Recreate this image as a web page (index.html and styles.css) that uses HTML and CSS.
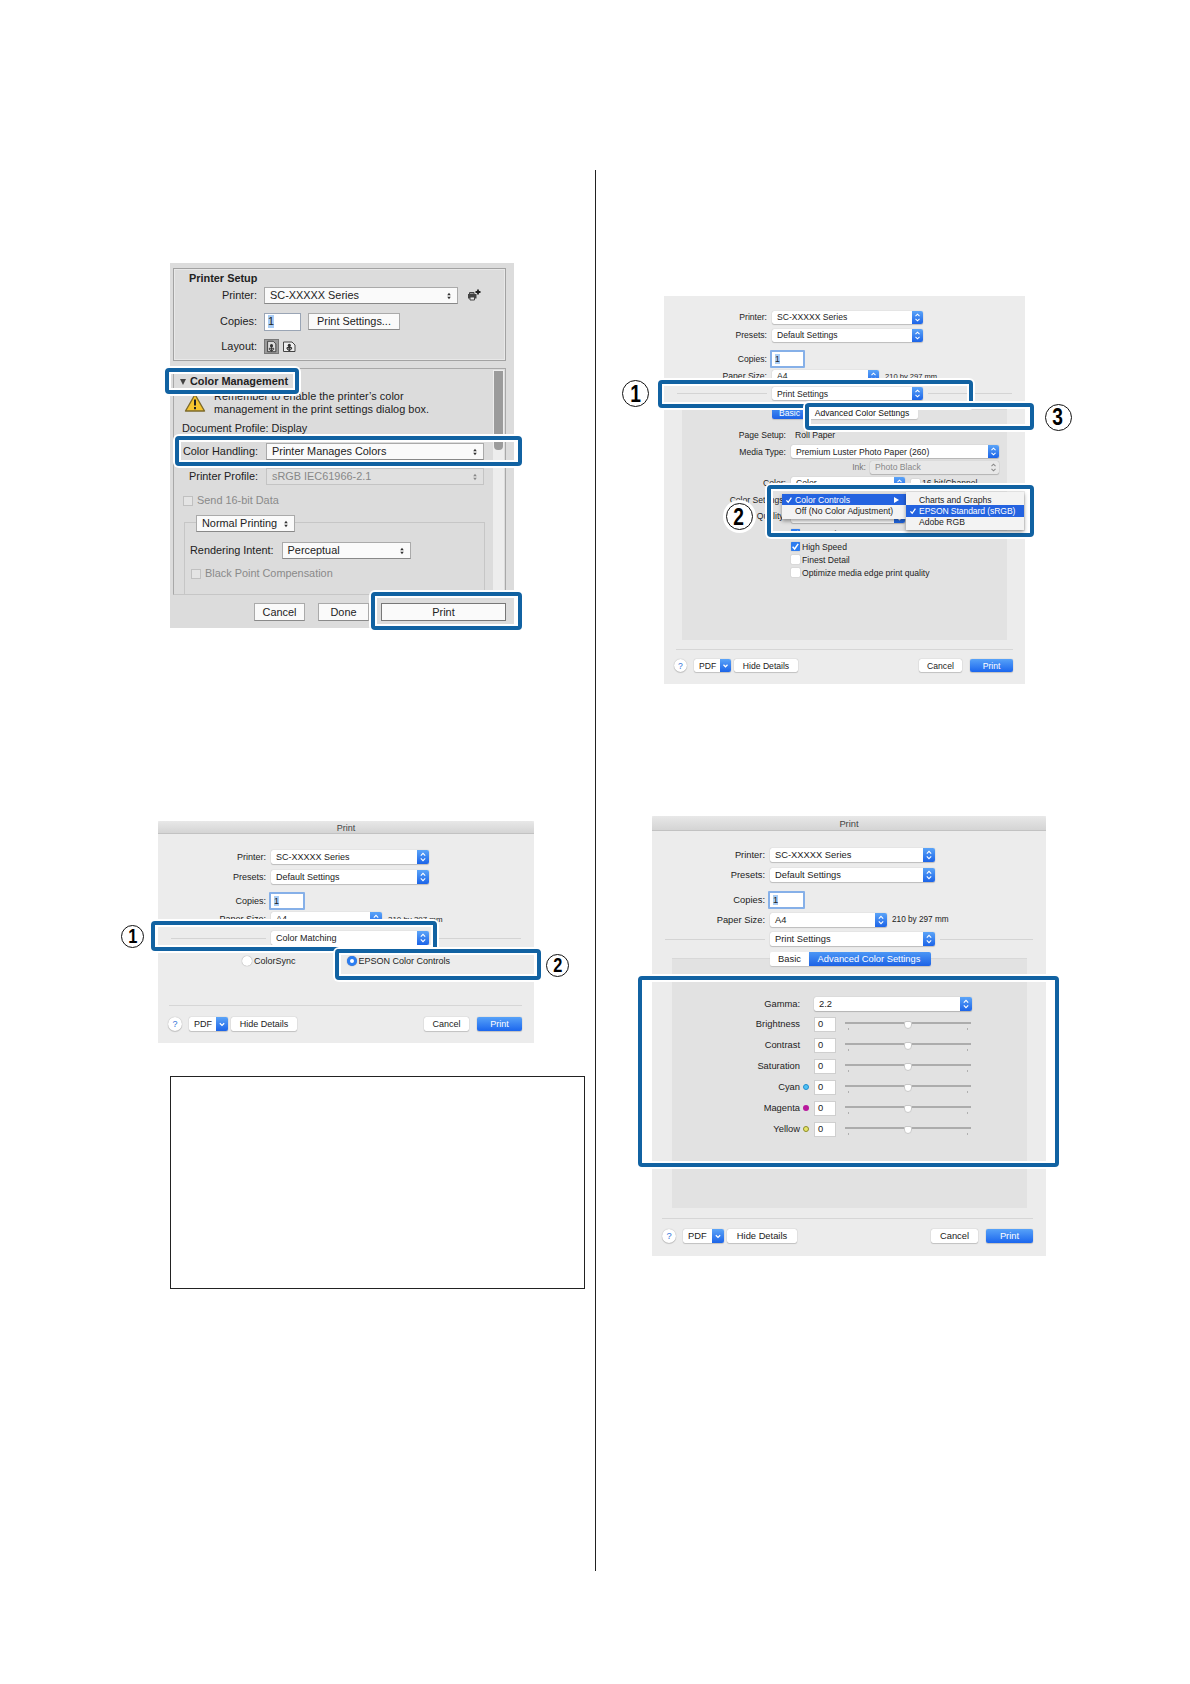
FILE: index.html
```html
<!DOCTYPE html>
<html lang="en">
<head>
    <meta charset="UTF-8">
    <title>Print Settings</title>
    <link rel="stylesheet" href="styles.css">
</head>
<body>
    <svg width="0" height="0" class="defs">
        <symbol id="updown" viewBox="0 0 12 14">
            <path d="M3.8 5.6 6 3.4l2.2 2.2M3.8 8.4 6 10.6l2.2-2.2" fill="none" stroke="currentColor" stroke-width="1.1"/>
        </symbol>
        <symbol id="down" viewBox="0 0 12 14">
            <path d="M3.8 6.2 6 8.4l2.2-2.2" fill="none" stroke="currentColor" stroke-width="1.3"/>
        </symbol>
        <symbol id="arrows" viewBox="0 0 6 8">
            <path d="M3 .8 4.8 3.2H1.2zM3 7.2 4.8 4.8H1.2z" fill="currentColor"/>
        </symbol>
        <symbol id="tick" viewBox="0 0 10 10">
            <path d="M1.8 5.4 4 7.8 8 2" fill="none" stroke="currentColor" stroke-width="1.6"/>
        </symbol>
    </svg>

    <div class="page">
        <div class="column left">
            <!-- Photoshop print dialog -->
            <div class="dialog ps">
                <div class="setup">
                    <b class="setup-title">Printer Setup</b>
                    <div class="ps-row">
                        <span class="ps-label">Printer:</span>
                        <span class="ps-select w-printer">SC-XXXXX Series<svg><use href="#arrows"/></svg></span>
                        <svg class="add-printer" viewBox="0 0 15 13">
                            <path d="M2 5h8.5v4.5H2z" fill="#444"/>
                            <path d="M3.5 3.5H8V5H3.5zM4 8h4.5v3H4z" fill="#e8e8e8" stroke="#444"/>
                            <path d="M12 .5v5M9.5 3h5" stroke="#222" stroke-width="1.8"/>
                        </svg>
                    </div>
                    <div class="ps-row copies">
                        <span class="ps-label">Copies:</span>
                        <span class="ps-input"><i>1</i></span>
                        <span class="ps-button w-settings">Print Settings...</span>
                    </div>
                    <div class="ps-row layout">
                        <span class="ps-label">Layout:</span>
                        <svg class="orient on" viewBox="0 0 15 15">
                            <path d="M3 1.5h6.5l3 3v9H3z" fill="#ddd" stroke="#333"/>
                            <circle cx="7.5" cy="6.5" r="1.8" fill="#333"/><path d="M5 9.5v1.5l2.5 2 2.5-2V9.5zM7.5 7v6" stroke="#333" fill="#999"/>
                        </svg>
                        <svg class="orient" viewBox="0 0 15 15">
                            <path d="M1.5 3H10l3 3v6.5H1.5z" fill="#eee" stroke="#444"/>
                            <circle cx="7.3" cy="6.4" r="1.6" fill="#333"/><path d="M5 8.5V10l2.3 1.6L9.6 10V8.5zM7.3 7v5" stroke="#333" fill="#999"/>
                        </svg>
                    </div>
                </div>
                <div class="management">
                    <div class="scroll"><div class="thumb"></div></div>
                    <div class="section-title"><span class="triangle"></span><b>Color Management</b></div>
                    <div class="warning">
                        <svg viewBox="0 0 22 20">
                            <path d="M11 1.5 20.5 18h-19z" fill="#f6c52e" stroke="#7c6a2b" stroke-width="1.4" stroke-linejoin="round"/>
                            <path d="M11 6.5v6M11 14v2.2" stroke="#222" stroke-width="2"/>
                        </svg>
                        <p>Remember to enable the printer’s color<br>management in the print settings dialog box.</p>
                    </div>
                    <div class="profile">Document Profile: Display</div>
                    <div class="ps-row handling">
                        <span class="ps-label">Color Handling:</span>
                        <span class="ps-select w-wide">Printer Manages Colors<svg><use href="#arrows"/></svg></span>
                    </div>
                    <div class="ps-row printer-profile">
                        <span class="ps-label">Printer Profile:</span>
                        <span class="ps-select w-wide disabled">sRGB IEC61966-2.1<svg><use href="#arrows"/></svg></span>
                    </div>
                    <div class="ps-check"><span></span>Send 16-bit Data</div>
                    <div class="proof">
                        <span class="ps-select w-normal">Normal Printing<svg><use href="#arrows"/></svg></span>
                        <div class="ps-row intent">
                            <span>Rendering Intent:</span>
                            <span class="ps-select w-intent">Perceptual<svg><use href="#arrows"/></svg></span>
                        </div>
                        <div class="ps-check black-point"><span></span>Black Point Compensation</div>
                    </div>
                </div>
                <div class="ps-buttons">
                    <span class="ps-button">Cancel</span>
                    <span class="ps-button">Done</span>
                    <span class="ps-button primary">Print</span>
                </div>
                <div class="mark ps-mark-title"></div>
                <div class="mark ps-mark-handling"></div>
                <div class="mark ps-mark-print"></div>
            </div>

            <!-- Color Matching -->
            <div class="dialog mac matching">
                <div class="titlebar">Print</div>
                <div class="row r-printer"><span class="label">Printer:</span><span class="select">SC-XXXXX Series<svg><use href="#updown"/></svg></span></div>
                <div class="row r-presets"><span class="label">Presets:</span><span class="select">Default Settings<svg><use href="#updown"/></svg></span></div>
                <div class="row r-copies"><span class="label">Copies:</span><span class="input"><i>1</i></span></div>
                <div class="row r-paper"><span class="label">Paper Size:</span><span class="select short">A4<svg><use href="#updown"/></svg></span><small>210 by 297 mm</small></div>
                <div class="row r-section"><span class="label line"></span><span class="select">Color Matching<svg><use href="#updown"/></svg></span><span class="line"></span></div>
                <div class="radios">
                    <span class="radio"></span>ColorSync
                    <span class="radio checked"></span>EPSON Color Controls
                </div>
                <div class="footer">
                    <span class="help">?</span>
                    <span class="button pdf">PDF<svg><use href="#down"/></svg></span>
                    <span class="button details">Hide Details</span>
                    <span class="button cancel">Cancel</span>
                    <span class="button print">Print</span>
                </div>
                <div class="mark mark-a"></div>
                <div class="mark mark-b"></div>
                <div class="number num-a"><b>1</b></div>
                <div class="number num-b"><b>2</b></div>
            </div>

            <div class="note"></div>
        </div>

        <div class="column right">
            <!-- Print Settings, Basic tab -->
            <div class="dialog mac basic">
                <div class="row r-printer"><span class="label">Printer:</span><span class="select">SC-XXXXX Series<svg><use href="#updown"/></svg></span></div>
                <div class="row r-presets"><span class="label">Presets:</span><span class="select">Default Settings<svg><use href="#updown"/></svg></span></div>
                <div class="row r-copies"><span class="label">Copies:</span><span class="input"><i>1</i></span></div>
                <div class="row r-paper"><span class="label">Paper Size:</span><span class="select short">A4<svg><use href="#updown"/></svg></span><small>210 by 297 mm</small></div>
                <div class="row r-section"><span class="label line"></span><span class="select">Print Settings<svg><use href="#updown"/></svg></span><span class="line"></span></div>
                <div class="panel">
                    <div class="tabs"><span class="active">Basic</span><span>Advanced Color Settings</span></div>
                    <div class="row p-setup"><span class="label">Page Setup:</span><span class="plain">Roll Paper</span></div>
                    <div class="row p-media"><span class="label">Media Type:</span><span class="select">Premium Luster Photo Paper (260)<svg><use href="#updown"/></svg></span></div>
                    <div class="row p-ink"><span class="label">Ink:</span><span class="select disabled">Photo Black<svg><use href="#updown"/></svg></span></div>
                    <div class="row p-color"><span class="label">Color:</span><span class="select">Color<svg><use href="#updown"/></svg></span><span class="box"></span>16 bit/Channel</div>
                    <div class="row p-settings"><span class="label">Color Settings:</span></div>
                    <div class="row p-quality"><span class="label">Quality:</span><span class="select"><svg><use href="#updown"/></svg></span></div>
                    <div class="row p-check"><span class="box on"><svg><use href="#tick"/></svg></span>Super MicroWeave</div>
                    <div class="row p-check"><span class="box on"><svg><use href="#tick"/></svg></span>High Speed</div>
                    <div class="row p-check"><span class="box"></span>Finest Detail</div>
                    <div class="row p-check"><span class="box"></span>Optimize media edge print quality</div>
                </div>
                <div class="footer">
                    <span class="help">?</span>
                    <span class="button pdf">PDF<svg><use href="#down"/></svg></span>
                    <span class="button details">Hide Details</span>
                    <span class="button cancel">Cancel</span>
                    <span class="button print">Print</span>
                </div>
                <div class="mark mark-a"></div>
                <div class="mark mark-b"></div>
                <div class="mark mark-c"></div>
                <div class="menu main-menu">
                    <div class="item selected"><svg><use href="#tick"/></svg>Color Controls<span class="more"></span></div>
                    <div class="item">Off (No Color Adjustment)</div>
                </div>
                <div class="menu sub-menu">
                    <div class="item">Charts and Graphs</div>
                    <div class="item selected"><svg><use href="#tick"/></svg>EPSON Standard (sRGB)</div>
                    <div class="item">Adobe RGB</div>
                </div>
                <div class="number num-a"><b>1</b></div>
                <div class="number num-b"><b>2</b></div>
                <div class="number num-c"><b>3</b></div>
            </div>

            <!-- Print Settings, Advanced Color Settings tab -->
            <div class="dialog mac advanced">
                <div class="titlebar">Print</div>
                <div class="row r-printer"><span class="label">Printer:</span><span class="select">SC-XXXXX Series<svg><use href="#updown"/></svg></span></div>
                <div class="row r-presets"><span class="label">Presets:</span><span class="select">Default Settings<svg><use href="#updown"/></svg></span></div>
                <div class="row r-copies"><span class="label">Copies:</span><span class="input"><i>1</i></span></div>
                <div class="row r-paper"><span class="label">Paper Size:</span><span class="select short">A4<svg><use href="#updown"/></svg></span><small>210 by 297 mm</small></div>
                <div class="row r-section"><span class="label line"></span><span class="select">Print Settings<svg><use href="#updown"/></svg></span><span class="line"></span></div>
                <div class="panel">
                    <div class="tabs"><span>Basic</span><span class="active">Advanced Color Settings</span></div>
                    <div class="row gamma"><span class="label">Gamma:</span><span class="select">2.2<svg><use href="#updown"/></svg></span></div>
                    <div class="adjust"><span class="label">Brightness</span><span class="dot"></span><span class="value">0</span><span class="slider"><i></i></span></div>
                    <div class="adjust"><span class="label">Contrast</span><span class="dot"></span><span class="value">0</span><span class="slider"><i></i></span></div>
                    <div class="adjust"><span class="label">Saturation</span><span class="dot"></span><span class="value">0</span><span class="slider"><i></i></span></div>
                    <div class="adjust"><span class="label">Cyan</span><span class="dot cyan"></span><span class="value">0</span><span class="slider"><i></i></span></div>
                    <div class="adjust"><span class="label">Magenta</span><span class="dot magenta"></span><span class="value">0</span><span class="slider"><i></i></span></div>
                    <div class="adjust"><span class="label">Yellow</span><span class="dot yellow"></span><span class="value">0</span><span class="slider"><i></i></span></div>
                </div>
                <div class="footer">
                    <span class="help">?</span>
                    <span class="button pdf">PDF<svg><use href="#down"/></svg></span>
                    <span class="button details">Hide Details</span>
                    <span class="button cancel">Cancel</span>
                    <span class="button print">Print</span>
                </div>
                <div class="mark mark-a"></div>
            </div>
        </div>
    </div>
</body>
</html>
```
FILE: styles.css
```css
* {
    box-sizing: border-box;
}
body {
    margin: 0;
    background-color: #fff;
    font-family: "Liberation Sans", Arial, sans-serif;
    color: #222;
}
.defs {
    display: block;
}
.page {
    width: 1190px;
    height: 1684px;
    padding-top: 170px;
    display: flex;
    align-items: flex-start;
}
.column {
    height: 1401px;
    display: flex;
    flex-direction: column;
    align-items: flex-start;
}
.left {
    width: 596px;
    border-right: 1px solid #222;
}
.right {
    width: 594px;
}
.dialog {
    position: relative;
    flex-shrink: 0;
    display: flex;
    flex-direction: column;
    white-space: nowrap;
}
.note {
    width: 415px;
    height: 213px;
    margin: 33px 0 0 170px;
    border: 1px solid #222;
}

/* highlight frames and step numbers */
.mark {
    position: absolute;
    border: 4px solid #1162a2;
    border-radius: 4px;
    box-shadow: 0 0 0 2px #fff, inset 0 0 0 2px #fff;
}
.number {
    position: absolute;
    width: 23px;
    height: 23px;
    border: 1px solid #111;
    border-radius: 50%;
    background-color: #fff;
    color: #000;
    display: flex;
    align-items: center;
    justify-content: center;
    font-size: 20.5px;
    line-height: 1;
}
.number b {
    transform: scaleX(0.8);
}

/* Photoshop dialog */
.ps {
    width: 344px;
    height: 365px;
    margin: 93px 0 0 170px;
    background-color: #dcdcdc;
    font-size: 10.9px;
    line-height: 13px;
}
.setup {
    width: 333px;
    height: 93px;
    margin: 5px 0 0 3px;
    border: 1px solid #a2a2a2;
    box-shadow: inset 0 0 0 1px #e8e8e8;
}
.setup-title {
    display: block;
    margin: 3px 0 0 15px;
}
.ps-row {
    height: 17px;
    display: flex;
    align-items: center;
}
.setup .ps-row {
    margin-top: 2px;
}
.setup .copies {
    margin-top: 9px;
}
.setup .layout {
    margin-top: 8px;
}
.ps-label {
    width: 83px;
    margin-right: 7px;
    text-align: right;
}
.ps-select {
    height: 17px;
    padding: 0 5px;
    display: flex;
    align-items: center;
    justify-content: space-between;
    background-color: #fafafa;
    border: 1px solid #aaa;
    border-bottom-color: #888;
}
.ps-select svg {
    width: 6px;
    height: 8px;
    color: #333;
}
.ps-select.disabled {
    background-color: #e0e0e0;
    border-color: #c4c4c4;
    color: #888;
}
.ps-select.disabled svg {
    color: #888;
}
.w-printer {
    width: 194px;
}
.w-wide {
    width: 218px;
}
.w-normal {
    width: 99px;
}
.w-intent {
    width: 129px;
}
.add-printer {
    width: 15px;
    height: 13px;
    margin-left: 8px;
}
.ps-input {
    width: 37px;
    height: 18px;
    padding-left: 3px;
    display: flex;
    align-items: center;
    background-color: #fff;
    border: 1px solid #9aa5b5;
}
.ps-input i,
.input i {
    font-style: normal;
    background-color: #a9cdf5;
}
.ps-button {
    height: 18px;
    display: flex;
    align-items: center;
    justify-content: center;
    background-color: #fafafa;
    border: 1px solid #aaa;
    border-bottom-color: #8a8a8a;
}
.w-settings {
    width: 92px;
    height: 17px;
    margin-left: 7px;
}
.orient {
    width: 15px;
    height: 15px;
    margin-right: 3px;
}
.orient.on {
    background-color: #999;
    border: 1px solid #777;
}
.management {
    position: relative;
    width: 333px;
    height: 227px;
    margin: 7px 0 0 3px;
    border: 1px solid #a8a8a8;
    border-bottom-color: #c6c6c6;
}
.scroll {
    position: absolute;
    top: 1px;
    right: 1px;
    width: 11px;
    height: 224px;
    background-color: #ededed;
}
.thumb {
    width: 9px;
    height: 79px;
    margin: 1px;
    border-radius: 0 0 4px 4px;
    background-color: #9b9b9b;
}
.section-title {
    height: 15px;
    margin: 5px 0 0 6px;
    display: flex;
    align-items: center;
}
.triangle {
    margin-right: 4px;
    border: 3px solid transparent;
    border-top: 6px solid #444;
    border-bottom: 0;
}
.warning {
    height: 27px;
    margin-left: 10px;
    display: flex;
}
.warning svg {
    width: 22px;
    height: 22px;
    margin: 3px 8px 0 0;
}
.warning p {
    margin: 1px 0 0;
    letter-spacing: 0.03px;
}
.profile {
    margin: 6px 0 0 8px;
}
.management .ps-label {
    width: 84px;
    margin-right: 8px;
}
.handling {
    margin-top: 8px;
}
.printer-profile {
    margin-top: 8px;
}
.ps-check {
    height: 11px;
    margin: 10px 0 0 9px;
    display: flex;
    align-items: center;
    color: #8a8a8a;
}
.ps-check span {
    width: 10px;
    height: 10px;
    margin-right: 4px;
    background-color: #e4e4e4;
    border: 1px solid #c0c0c0;
}
.proof {
    width: 301px;
    height: 72px;
    margin: 16px 0 0 10px;
    border: 1px solid #c6c6c6;
    border-bottom: 0;
    display: flex;
    flex-direction: column;
}
.proof .w-normal {
    margin: -8px 0 0 11px;
}
.intent {
    margin: 10px 0 0 5px;
    gap: 8px;
}
.black-point {
    margin: 9px 0 0 6px;
}
.ps-buttons {
    margin: 8px 0 0 84px;
    display: flex;
}
.ps-buttons .ps-button {
    width: 51px;
    margin-right: 13px;
}
.ps-buttons .primary {
    width: 125px;
    margin: 0 0 0 -1px;
    border-color: #777;
}
.ps-mark-title {
    left: -5px;
    top: 105px;
    width: 134px;
    height: 26px;
}
.ps-mark-handling {
    left: 5px;
    top: 173px;
    width: 347px;
    height: 30px;
}
.ps-mark-print {
    left: 201px;
    top: 329px;
    width: 151px;
    height: 38px;
}

/* macOS print dialogs */
.mac {
    background-color: #ececec;
}
.titlebar {
    height: 14px;
    display: flex;
    align-items: center;
    justify-content: center;
    background: linear-gradient(#e8e8e8, #d4d4d4);
    border-bottom: 1px solid #c2c2c2;
    border-radius: 3px 3px 0 0;
    color: #444;
}
.row {
    height: var(--row);
    display: flex;
    align-items: center;
}
.mac > .row > .label {
    width: var(--label);
    margin-right: 5px;
}
.label {
    flex-shrink: 0;
    text-align: right;
}
.select {
    width: var(--field);
    height: var(--row);
    padding-left: 5px;
    flex-shrink: 0;
    display: flex;
    align-items: center;
    justify-content: space-between;
    background-color: #fff;
    border-radius: 2px;
    box-shadow: 0 0 1px rgba(0, 0, 0, 0.3), 0 1px 1px rgba(0, 0, 0, 0.18);
}
.select svg,
.pdf svg {
    width: 12px;
    height: 100%;
    color: #fff;
    background: linear-gradient(#5ba4f8, #1c64e8);
    border-radius: 0 2px 2px 0;
}
.select.disabled {
    background-color: #e8e8e8;
    color: #888;
}
.select.disabled svg {
    background: none;
    color: #888;
}
.row .select.short {
    width: var(--short);
}
.row small {
    margin-left: 6px;
    font-size: 0.88em;
}
.input {
    width: 36px;
    height: 18px;
    margin-left: -2px;
    padding-left: 3px;
    display: flex;
    align-items: center;
    background-color: #fff;
    border: 2px solid #86b0e8;
    border-radius: 1px;
}
.line {
    height: 1px;
    background-color: #d4d4d4;
}
.r-section > .line:last-child {
    flex: 1;
    margin: 0 13px 0 5px;
}
.mac > .r-section > .label.line {
    width: calc(var(--label) - 13px);
    margin-left: 13px;
}
.footer {
    margin: 0 12px;
    border-top: 1px solid #d6d6d6;
    display: flex;
    align-items: center;
}
.help,
.button {
    height: var(--row);
    background-color: #fff;
    border-radius: 2px;
    box-shadow: 0 0 1px rgba(0, 0, 0, 0.35), 0 1px 1px rgba(0, 0, 0, 0.15);
    display: flex;
    align-items: center;
    justify-content: center;
}
.help {
    width: var(--row);
    border-radius: 50%;
    color: #3474d8;
}
.pdf {
    justify-content: space-between;
    padding-left: 5px;
    margin: 0 3px 0 7px;
}
.cancel {
    margin-left: auto;
}
.print {
    margin-left: 8px;
    color: #fff;
    background: linear-gradient(#57a2f8, #1b66ee);
}
.panel {
    display: flex;
    flex-direction: column;
    background-color: #e2e2e2;
    border-top: 1px solid #d8d8d8;
}
.tabs {
    display: flex;
    height: var(--row);
    flex-shrink: 0;
}
.tabs span {
    display: flex;
    align-items: center;
    justify-content: center;
    background-color: #fff;
    box-shadow: 0 1px 1px rgba(0, 0, 0, 0.15);
    border-radius: 0 2px 2px 0;
}
.tabs span:first-child {
    border-radius: 2px 0 0 2px;
}
.tabs .active {
    color: #fff;
    background: linear-gradient(#4c97f5, #1d62e6);
}

/* Color Matching dialog */
.matching {
    --row: 14px;
    --label: 108px;
    --field: 158px;
    --short: 111px;
    width: 376px;
    height: 222px;
    margin: 193px 0 0 158px;
    font-size: 9px;
}
.matching .titlebar {
    padding-top: 1px;
}
.matching .r-printer {
    margin-top: 16px;
}
.matching .r-presets {
    margin-top: 6px;
}
.matching .r-copies {
    margin-top: 10px;
}
.matching .r-paper {
    margin-top: 4px;
}
.matching .r-section {
    margin-top: 5px;
}
.radios {
    height: 14px;
    margin: 9px 0 0 84px;
    display: flex;
    align-items: center;
}
.radio {
    width: 10px;
    height: 10px;
    margin-right: 2px;
    border-radius: 50%;
    background-color: #fff;
    box-shadow: 0 0 1px rgba(0, 0, 0, 0.5);
}
.radio.checked {
    margin-left: 51px;
    border: 3px solid #2b7df2;
}
.matching .footer {
    height: 40px;
    margin-top: 37px;
    margin-left: 11px;
}
.matching .help {
    margin-left: -1px;
}
.matching .pdf {
    width: 39px;
}
.matching .details {
    width: 66px;
}
.matching .cancel,
.matching .print {
    width: 45px;
}
.matching .mark-a {
    left: -7px;
    top: 100px;
    width: 286px;
    height: 30px;
}
.matching .mark-b {
    left: 177px;
    top: 128px;
    width: 206px;
    height: 31px;
}
.matching .num-a {
    left: -37px;
    top: 104px;
}
.matching .num-b {
    left: 388px;
    top: 133px;
}

/* Basic tab dialog */
.basic {
    --row: 13px;
    --label: 103px;
    --field: 151px;
    --short: 107px;
    width: 361px;
    height: 388px;
    margin: 126px 0 0 68px;
    font-size: 8.6px;
}
.basic .select svg,
.basic .pdf svg {
    width: 11px;
}
.basic .r-printer {
    margin-top: 14.5px;
}
.basic .r-presets {
    margin-top: 5px;
}
.basic .r-copies {
    margin-top: 11px;
}
.basic .r-paper {
    margin-top: 4px;
}
.basic .r-section {
    margin-top: 4.5px;
}
.basic .input {
    width: 35px;
}
.basic .panel {
    width: 325px;
    height: 231px;
    margin: 9px 0 0 18px;
}
.basic .tabs {
    margin: -4px 0 0 90px;
}
.basic .tabs .active {
    width: 35px;
}
.basic .tabs span:last-child {
    width: 111px;
    padding-right: 1px;
    color: #111;
}
.basic .panel .label {
    width: 104px;
    margin-right: 5px;
}
.p-setup {
    margin-top: 9px;
}
.p-setup .plain {
    margin-left: 4px;
}
.p-media {
    margin-top: 4px;
}
.p-media .select {
    width: 208px;
}
.p-ink {
    margin-top: 2.5px;
    color: #777;
}
.basic .p-ink .label {
    width: 184px;
    margin-right: 4px;
}
.p-ink .select {
    width: 129px;
}
.p-color {
    margin-top: 3px;
}
.p-color .select {
    width: 114px;
    margin-right: 6px;
}
.p-settings,
.p-quality {
    margin-top: 3.5px;
}
.p-quality .select {
    width: 114px;
    justify-content: flex-end;
}
.p-check {
    margin-left: 109px;
    flex-shrink: 0;
}
.p-quality + .p-check {
    margin-top: 4.5px;
}
.box {
    width: 9px;
    height: 9px;
    margin-right: 2px;
    flex-shrink: 0;
    background-color: #fff;
    border-radius: 1px;
    box-shadow: 0 0 1px rgba(0, 0, 0, 0.4);
}
.box.on {
    color: #fff;
    background-color: #2d7cf0;
}
.box svg {
    display: block;
    width: 9px;
    height: 9px;
}
.basic .footer {
    height: 32px;
    margin-top: 9px;
}
.basic .help {
    margin-left: -2px;
}
.basic .pdf {
    width: 37px;
}
.basic .details {
    width: 64px;
}
.basic .cancel,
.basic .print {
    width: 43px;
}
.basic .mark-a {
    left: -6px;
    top: 84px;
    width: 315px;
    height: 28px;
}
.basic .mark-b {
    left: 141px;
    top: 107px;
    width: 229px;
    height: 27px;
}
/* the tab button shows through the top of its frame */
.basic .mark-c {
    left: 103px;
    top: 189px;
    width: 267px;
    height: 52px;
}
.menu {
    position: absolute;
    background-color: #f3f3f3;
    box-shadow: 0 2px 4px rgba(0, 0, 0, 0.4);
}
.item {
    position: relative;
    height: 11.3px;
    padding-left: 13px;
    display: flex;
    align-items: center;
}
.item.selected {
    color: #fff;
    background-color: #2463e0;
}
.item svg {
    position: absolute;
    left: 3px;
    width: 8px;
    height: 8px;
}
.more {
    margin: 0 7px 0 auto;
    border: 3px solid transparent;
    border-left: 5px solid #fff;
    border-right: 0;
}
.main-menu {
    left: 118px;
    top: 198px;
    width: 124px;
    height: 25px;
}
.sub-menu {
    left: 242px;
    top: 196px;
    width: 118px;
    height: 38px;
    padding-top: 2px;
}
.sub-menu .selected {
    letter-spacing: -0.1px;
}
.basic .number {
    width: 27px;
    height: 27px;
    font-size: 24px;
}
.basic .num-a {
    left: -42px;
    top: 84px;
}
.basic .num-b {
    left: 61.5px;
    top: 207px;
    box-shadow: 0 0 0 3px #fff;
}
.basic .num-c {
    left: 380.5px;
    top: 107.5px;
}

/* Advanced Color Settings dialog */
.advanced {
    --row: 14px;
    --label: 113px;
    --field: 165px;
    --short: 117px;
    width: 394px;
    height: 440px;
    margin: 132px 0 0 56px;
    font-size: 9.35px;
}
.advanced .titlebar {
    height: 15px;
    padding-top: 1px;
}
.advanced .r-printer {
    margin-top: 17px;
}
.advanced .r-presets {
    margin-top: 6px;
}
.advanced .r-copies {
    margin-top: 11px;
}
.advanced .r-paper,
.advanced .r-section {
    margin-top: 5.5px;
}
.advanced .r-paper small {
    margin-left: 5px;
}
.advanced .input {
    width: 37px;
}
.advanced .panel {
    width: 355px;
    height: 250px;
    margin: 12px 0 0 20px;
}
.advanced .tabs {
    margin: -7px 0 0 98px;
}
.advanced .tabs span:first-child {
    width: 39px;
}
.advanced .tabs .active {
    width: 122px;
    padding-right: 2px;
}
.advanced .panel .label {
    width: 128px;
}
.advanced .gamma {
    margin-top: 31px;
    margin-bottom: 2.5px;
}
.gamma .select {
    width: 158px;
    margin-left: 14px;
}
.adjust {
    height: 21px;
    flex-shrink: 0;
    display: flex;
    align-items: center;
}
.dot {
    width: 6px;
    height: 6px;
    margin: 0 4px 0 3px;
    border-radius: 50%;
}
.adjust .value {
    margin-left: 1px;
}
.cyan {
    border: 1px solid #1e8ccf;
    background-color: #52c2f4;
}
.magenta {
    background-color: #b8189c;
}
.yellow {
    border: 1px solid #8c8b28;
    background-color: #e8e66a;
}
.value {
    width: 22px;
    height: 15px;
    padding-left: 3px;
    display: flex;
    align-items: center;
    background-color: #fff;
    border: 1px solid #cfcfcf;
}
.slider {
    width: 126px;
    height: 8px;
    margin: 3px 0 0 9px;
    border-top: 2px solid #acacac;
    display: flex;
    justify-content: space-between;
    align-items: flex-end;
}
.slider::before,
.slider::after {
    content: "";
    width: 1px;
    height: 2px;
    margin: 0 3px;
    background-color: #b0b0b0;
}
.slider i {
    width: 8px;
    height: 8px;
    margin-bottom: 1px;
    background-color: #fff;
    border: 1px solid #c8c8c8;
    border-radius: 2px 2px 4px 4px;
}
.advanced .footer {
    height: 35px;
    margin: 10px 13px 0 10px;
}
.advanced .pdf {
    width: 41px;
}
.advanced .details {
    width: 70px;
}
.advanced .cancel,
.advanced .print {
    width: 47px;
}
.advanced .mark-a {
    left: -14px;
    top: 160px;
    width: 421px;
    height: 191px;
}
```
